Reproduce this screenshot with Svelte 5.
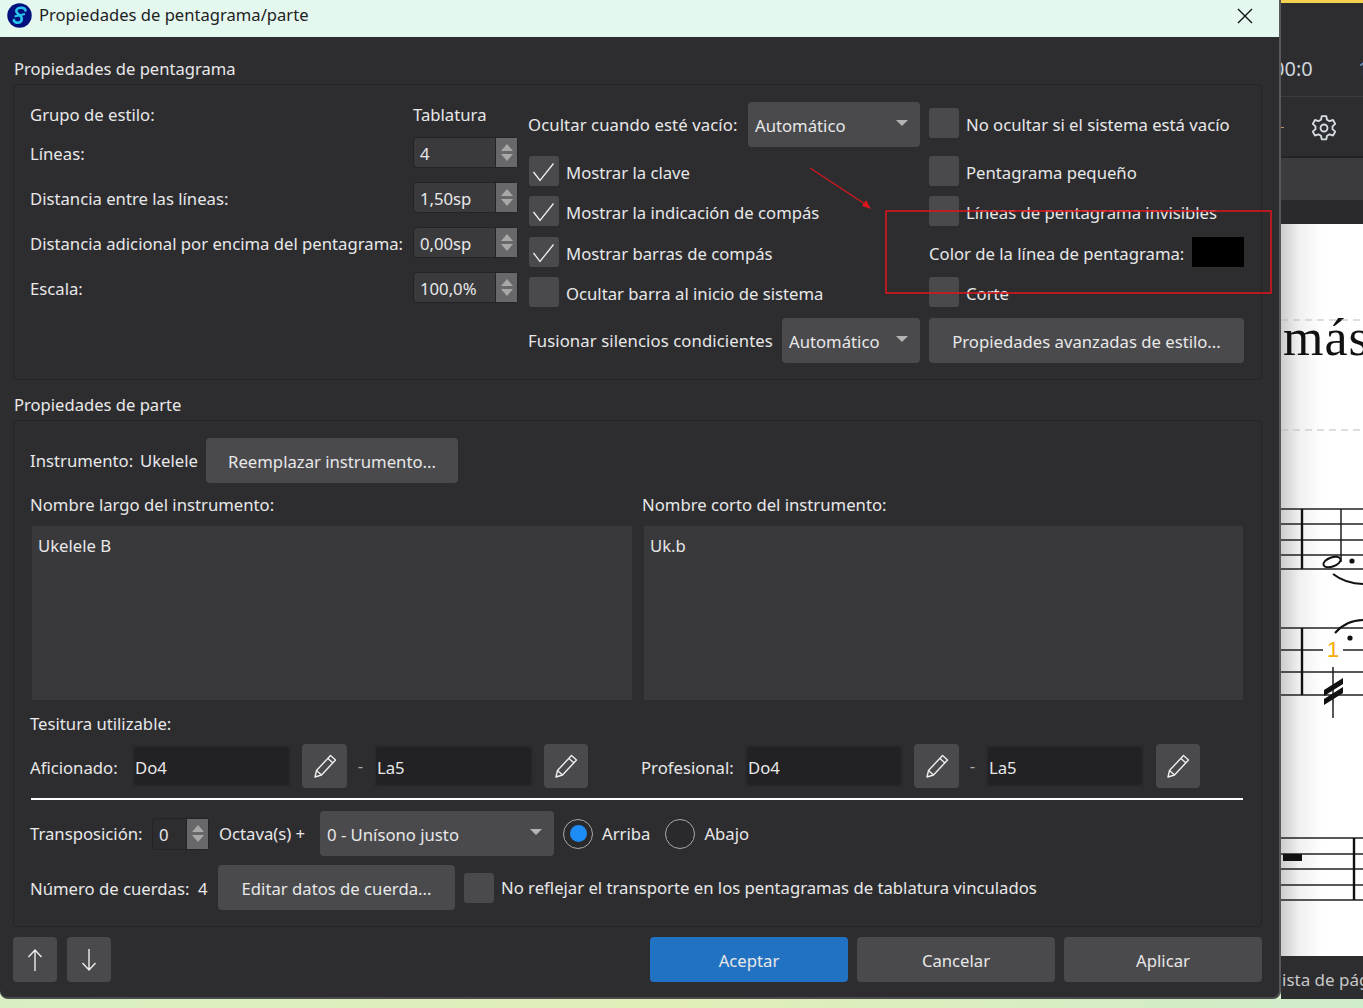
<script>
	const spins = [
		{ label: 'Líneas:', value: '4' },
		{ label: 'Distancia entre las líneas:', value: '1,50sp' },
		{ label: 'Distancia adicional por encima del pentagrama:', value: '0,00sp' },
		{ label: 'Escala:', value: '100,0%' }
	];
	const ranges = [
		{ label: 'Aficionado:', low: 'Do4', high: 'La5' },
		{ label: 'Profesional:', low: 'Do4', high: 'La5' }
	];
</script>

{#snippet spin(value, cls)}
	<div class="spin {cls}">
		<span class="spin-value">{value}</span>
		<span class="spin-arrows"><i class="up"></i><i class="down"></i></span>
	</div>
{/snippet}

{#snippet combo(value, cls)}
	<div class="btn combo {cls}"><span>{value}</span><i class="caret"></i></div>
{/snippet}

{#snippet check(text, on)}
	<label class="check">
		<span class="box">
			{#if on}
				<svg width="30" height="30" viewBox="0 0 30 30"><path d="M4.5 16 L11 24.5 L24.5 7.5" fill="none" stroke="#f0f0f0" stroke-width="1.3" /></svg>
			{/if}
		</span>
		{#if text}<span class="check-text">{text}</span>{/if}
	</label>
{/snippet}

{#snippet pencil()}
	<div class="btn icon-btn">
		<svg width="26" height="26" viewBox="0 0 26 26" fill="none" stroke="#eee" stroke-width="1.4" stroke-linejoin="round">
			<path d="M18.5 2.5 L23.5 7 L9.5 22 L3 24 L4.5 17.5 Z" />
			<path d="M16 5.5 L21 10" />
			<path d="M4.5 17.5 L9.5 22" />
		</svg>
	</div>
{/snippet}

<div class="screen">
	<div class="desk">
		<section class="dialog">
			<header class="title">
				<svg class="logo" width="25" height="25" viewBox="0 0 25 25">
					<circle cx="12.5" cy="12.5" r="12.2" fill="#00107c" />
					<path d="M18.5 7.5 C18 4 11 4 9.5 7 C8.5 9.5 11 11 13 12.5 C15.5 14.5 15.5 18.5 12 19.5 C9.5 20.2 7 19 6.8 17" fill="none" stroke="#27c3ea" stroke-width="2.6" stroke-linecap="round" />
					<path d="M7.5 13.5 L18 11" stroke="#27c3ea" stroke-width="1.8" />
				</svg>
				<span>Propiedades de pentagrama/parte</span>
				<svg class="close" width="16" height="16" viewBox="0 0 16 16"><path d="M1 1 L15 15 M15 1 L1 15" stroke="#111" stroke-width="1.4" /></svg>
			</header>

			<div class="body">
				<h2 class="first">Propiedades de pentagrama</h2>
				<div class="group staff">
					<div class="staff-left">
						<span class="grupo">Grupo de estilo:</span>
						<span class="grupo">Tablatura</span>
						{#each spins as s}
							<span class="spin-label">{s.label}</span>
							{@render spin(s.value, 'wide')}
						{/each}
					</div>

					<div class="staff-right">
						<div class="row">
							<span>Ocultar cuando esté vacío:</span>
							{@render combo('Automático', 'combo-a')}
						</div>
						<div class="offset">{@render check('No ocultar si el sistema está vacío', false)}</div>
						{@render check('Mostrar la clave', true)}
						{@render check('Pentagrama pequeño', false)}
						{@render check('Mostrar la indicación de compás', true)}
						{@render check('Líneas de pentagrama invisibles', false)}
						{@render check('Mostrar barras de compás', true)}
						<div class="color-row">
							<span>Color de la línea de pentagrama:</span>
							<i class="swatch"></i>
						</div>
						{@render check('Ocultar barra al inicio de sistema', false)}
						{@render check('Corte', false)}
						<div class="row">
							<span>Fusionar silencios condicientes</span>
							{@render combo('Automático', 'combo-b')}
						</div>
						<div class="btn wide-btn">Propiedades avanzadas de estilo...</div>
					</div>
				</div>

				<h2>Propiedades de parte</h2>
				<div class="group part">
					<div class="row instrument">
						<span class="inst-label">Instrumento:</span>
						<span class="inst-value">Ukelele</span>
						<div class="btn replace">Reemplazar instrumento...</div>
					</div>

					<div class="names">
						<div class="name-col">
							<span>Nombre largo del instrumento:</span>
							<div class="area">Ukelele B</div>
						</div>
						<div class="name-col">
							<span>Nombre corto del instrumento:</span>
							<div class="area">Uk.b</div>
						</div>
					</div>

					<div class="tesitura">Tesitura utilizable:</div>
					<div class="ranges">
						{#each ranges as r}
							<div class="range">
								<span class="range-label">{r.label}</span>
								<div class="field"><span>{r.low}</span></div>
								{@render pencil()}
								<span class="dash">-</span>
								<div class="field"><span>{r.high}</span></div>
								{@render pencil()}
							</div>
						{/each}
					</div>

					<hr />

					<div class="row transpose">
						<span class="trans-label">Transposición:</span>
						{@render spin('0', 'narrow')}
						<span class="octave">Octava(s) +</span>
						{@render combo('0 - Unísono justo', 'combo-c')}
						<label class="radio"><i class="dot on"></i>Arriba</label>
						<label class="radio"><i class="dot"></i>Abajo</label>
					</div>

					<div class="row strings">
						<span class="string-label">Número de cuerdas:</span>
						<span class="string-count">4</span>
						<div class="btn edit">Editar datos de cuerda...</div>
						{@render check('No reflejar el transporte en los pentagramas de tablatura vinculados', false)}
					</div>
				</div>

				<footer class="footer">
					<div class="btn arrow-btn">
						<svg width="18" height="26" viewBox="0 0 18 26" fill="none" stroke="#eee" stroke-width="1.4"><path d="M9 24 V3 M2.5 10 L9 3 L15.5 10" /></svg>
					</div>
					<div class="btn arrow-btn">
						<svg width="18" height="26" viewBox="0 0 18 26" fill="none" stroke="#eee" stroke-width="1.4"><path d="M9 2 V23 M2.5 16 L9 23 L15.5 16" /></svg>
					</div>
					<div class="btn action primary">Aceptar</div>
					<div class="btn action">Cancelar</div>
					<div class="btn action">Aplicar</div>
				</footer>
			</div>
		</section>

		<aside class="app">
			<div class="app-top"><span>00:0</span><span class="blue-one">1</span></div>
			<div class="app-tools">
				<i class="tick"></i>
				<svg width="30" height="30" viewBox="0 0 24 24" fill="none" stroke="#d5dbe0" stroke-width="1.5" stroke-linejoin="round">
					<circle cx="12" cy="12" r="2.8" />
					<path d="M10.2 2.5 h3.6 l.6 2.9 2 1.1 2.8-.9 1.8 3.1-2.2 2 v2.2 l2.2 2-1.8 3.1-2.8-.9-2 1.1-.6 2.9 h-3.6 l-.6-2.9-2-1.1-2.8.9-1.8-3.1 2.2-2 v-2.2 l-2.2-2 1.8-3.1 2.8.9 2-1.1 z" />
				</svg>
			</div>
			<div class="app-tabs"></div>
			<div class="app-dark"></div>
			<div class="score">
				<svg width="83" height="732" viewBox="1280 224 83 732">
					<text x="1282" y="355" font-family="Liberation Serif, serif" font-size="52" letter-spacing="1" fill="#111">más</text>
					<path d="M1280 320 H1363 M1280 430 H1363" stroke="#bbb" stroke-dasharray="7 5" />
					<g stroke="#222" stroke-width="1.5">
						<path d="M1280 509 H1363 M1280 524 H1363 M1280 540 H1363 M1280 555 H1363 M1280 569 H1363" />
						<path d="M1280 628 H1363 M1280 672 H1363 M1280 695 H1363 M1280 650 H1322 M1342 650 H1363" />
						<path d="M1280 838 H1363 M1280 854 H1363 M1280 869 H1363 M1280 885 H1363 M1280 900 H1363" />
					</g>
					<g stroke="#111" stroke-width="2.4" fill="none">
						<path d="M1301 509 V569 M1301 628 V695 M1353 838 V900" />
						<path d="M1340 509 V562" stroke-width="1.4" />
						<path d="M1332 667 V718" stroke-width="1.4" />
						<ellipse cx="1331" cy="562" rx="9" ry="4.5" transform="rotate(-20 1331 562)" stroke-width="2" />
						<path d="M1332 574 Q1345 584 1363 584" stroke-width="2" />
						<path d="M1334 633 Q1345 620 1363 620" stroke-width="2" />
					</g>
					<circle cx="1351" cy="561" r="2.6" fill="#111" />
					<circle cx="1349" cy="638" r="2.6" fill="#111" />
					<path d="M1323 690 L1342 678 V684 L1323 696 Z M1323 699 L1342 687 V693 L1323 705 Z" fill="#111" />
					<rect x="1282" y="854" width="19" height="7" fill="#111" />
					<text x="1326" y="657" font-family="Liberation Sans, sans-serif" font-size="22" fill="#f5ab00">1</text>
				</svg>
			</div>
			<div class="status"><span>ista de pág</span></div>
		</aside>
	</div>
	<div class="strip"></div>

	<svg class="markup" width="1363" height="1008" viewBox="0 0 1363 1008">
		<rect x="886" y="211" width="385" height="82" fill="none" stroke="#d8161d" stroke-width="1.6" />
		<path d="M810 168 L868 206" stroke="#d8161d" stroke-width="1.2" fill="none" />
		<path d="M871 209 L862 206 L866 200 Z" fill="#d8161d" />
	</svg>
</div>

<style>
	:global(body) {
		margin: 0;
		background: #d8eec6;
	}

	.screen {
		position: relative;
		width: 1363px;
		height: 1008px;
		overflow: hidden;
		font-family: 'Noto Sans', sans-serif;
		font-size: 16.7px;
		line-height: 22px;
		color: #e8e8e8;
	}

	.markup {
		position: absolute;
		inset: 0;
		z-index: 2;
		pointer-events: none;
	}

	.desk {
		display: flex;
		height: 999px;
	}

	.strip {
		height: 9px;
		background: linear-gradient(90deg, #d9efc3, #e1eeb8 50%, #cfeccb);
	}

	.dialog {
		position: relative;
		z-index: 1;
		width: 1281px;
		flex: none;
		box-sizing: border-box;
		border-right: 2px solid #58585b;
		border-bottom: 2px solid #4a4a4c;
		border-radius: 0 0 8px 8px;
		background: #2d2d30;
	}

	.title {
		display: flex;
		align-items: center;
		height: 29px;
		padding: 0 26px 8px 7px;
		background: #e5f8f0;
		color: #222;
		font-size: 16.6px;
	}

	.title span {
		margin-left: 7px;
		flex: 1;
	}

	.logo {
		margin-top: 1px;
	}

	.close {
		margin-top: 2px;
	}

	.body {
		padding: 21px 17px 0 13px;
	}

	h2 {
		margin: 14px 0 4px 1px;
		font-size: 16.6px;
		line-height: 22px;
		font-weight: 400;
	}

	h2.first {
		margin-top: 0;
	}

	.group {
		box-sizing: border-box;
		border: 1px solid #242427;
		border-radius: 4px;
	}

	.staff {
		display: flex;
		gap: 9px;
		height: 296px;
		padding: 17px 0 0 16px;
	}

	.staff-left {
		display: grid;
		grid-template-columns: 383px 105px;
		grid-template-rows: 35px 45px 45px 45px 31px;
		align-items: start;
		width: 489px;
		height: 201px;
		white-space: nowrap;
	}

	.staff-left .grupo {
		margin-top: 2px;
	}

	.spin-label {
		line-height: 33px;
	}

	.staff-right {
		display: grid;
		grid-template-columns: 392px 315px;
		grid-template-rows: 54px 40px 41px 40px 41px 45px;
		column-gap: 9px;
		align-items: start;
		white-space: nowrap;
	}

	.row {
		display: flex;
		align-items: center;
		white-space: nowrap;
	}

	.staff-right .row > span:first-child {
		padding-top: 1px;
		letter-spacing: 0.1px;
	}

	.btn {
		display: flex;
		align-items: center;
		justify-content: center;
		box-sizing: border-box;
		padding-top: 2px;
		border-radius: 4px;
		background: #4a4a4d;
	}

	.combo {
		justify-content: space-between;
		height: 45px;
		padding: 2px 12px 0 7px;
	}

	.combo-a {
		width: 172px;
		margin-left: auto;
	}

	.combo-b {
		width: 138px;
		margin-left: auto;
	}

	.combo-c {
		width: 234px;
		flex: none;
	}

	.caret {
		width: 0;
		height: 0;
		margin-bottom: 6px;
		border-left: 6px solid transparent;
		border-right: 6px solid transparent;
		border-top: 6px solid #b4b4b4;
	}

	.offset {
		margin-top: 6px;
	}

	.check {
		display: flex;
		align-items: center;
		gap: 7px;
		height: 30px;
		margin-left: 1px;
	}

	.check-text {
		padding-top: 4px;
	}

	.offset .check,
	.staff-right > .check:nth-child(even),
	.color-row,
	.strings .check {
		margin-left: 0;
	}

	.strings .check-text {
		padding-top: 0;
	}

	.box {
		flex: none;
		width: 30px;
		height: 30px;
		border-radius: 3px;
		background: #4a4a4d;
	}

	.box svg {
		display: block;
	}

	.color-row {
		display: flex;
		align-items: center;
		justify-content: space-between;
		height: 30px;
	}

	.color-row span {
		padding-top: 4px;
	}

	.swatch {
		width: 52px;
		height: 30px;
		background: #000;
	}

	.wide-btn {
		height: 45px;
	}

	.spin {
		display: flex;
		flex: none;
		box-sizing: border-box;
		height: 31px;
		border: 1px solid #232326;
		border-radius: 4px;
		background: #3a3a3d;
	}

	.spin.wide {
		width: 105px;
	}

	.spin.narrow {
		width: 57px;
		height: 32px;
		background: #2d2d30;
	}

	.spin-value {
		flex: 1;
		padding-left: 6px;
		line-height: 31px;
	}

	.spin-arrows {
		display: flex;
		flex-direction: column;
		align-items: center;
		justify-content: center;
		gap: 3px;
		width: 21px;
		border-left: 1px solid #232326;
		background: #68686b;
	}

	.up,
	.down {
		width: 0;
		height: 0;
		border-left: 6px solid transparent;
		border-right: 6px solid transparent;
	}

	.up {
		border-bottom: 7px solid #a8a8a8;
	}

	.down {
		border-top: 7px solid #a8a8a8;
	}

	.part {
		height: 507px;
		padding: 17px 18px 0 16px;
	}

	.instrument > span {
		padding-top: 1px;
	}

	.inst-label {
		width: 110px;
	}

	.inst-value {
		width: 66px;
	}

	.replace {
		width: 252px;
		height: 45px;
	}

	.names {
		display: grid;
		grid-template-columns: 612px 600px;
		margin-top: 11px;
	}

	.area {
		height: 174px;
		margin: 10px 0 0 2px;
		padding: 9px 6px;
		box-sizing: border-box;
		width: 600px;
		background: #39393c;
	}

	.name-col:last-child .area {
		width: 599px;
	}

	.tesitura {
		margin-top: 13px;
	}

	.ranges {
		display: grid;
		grid-template-columns: 611px 560px;
		margin-top: 9px;
	}

	.range {
		display: flex;
		align-items: center;
		height: 44px;
	}

	.range-label {
		width: 102px;
		flex: none;
		padding-top: 4px;
	}

	.range:last-child .range-label {
		width: 104px;
	}

	.range:last-child .field {
		width: 158px;
	}

	.range:last-child .icon-btn:last-child {
		margin-left: 1px;
	}

	.field {
		box-sizing: border-box;
		width: 159px;
		height: 42px;
		padding: 2px;
		border-radius: 2px;
		background: #29292b;
		margin-right: 11px;
	}

	.field span {
		display: block;
		height: 38px;
		padding-left: 1px;
		border-radius: 4px;
		background: #222225;
		line-height: 42px;
	}

	.icon-btn {
		width: 45px;
		height: 44px;
		padding-top: 0;
	}

	.icon-btn:last-child {
		width: 44px;
	}

	.dash {
		width: 27px;
		text-align: center;
		color: #aaa;
	}

	hr {
		height: 2px;
		margin: 10px 0 0 1px;
		border: 0;
		background: #fff;
	}

	.transpose {
		height: 45px;
		margin-top: 11px;
	}

	.trans-label {
		width: 122px;
		padding-top: 1px;
	}

	.octave {
		width: 101px;
		margin-left: 10px;
		padding-top: 1px;
	}

	.radio {
		display: flex;
		align-items: center;
		gap: 9px;
		margin-left: 9px;
	}

	.radio + .radio {
		margin-left: 15px;
	}

	.dot {
		position: relative;
		box-sizing: border-box;
		width: 30px;
		height: 30px;
		border: 1.5px solid #a8a8a8;
		border-radius: 50%;
		background: #2a2a2d;
	}

	.dot.on::after {
		content: '';
		position: absolute;
		inset: 5.5px;
		border-radius: 50%;
		background: #1e8cf5;
	}

	.strings {
		height: 45px;
		margin-top: 9px;
	}

	.string-label {
		width: 168px;
		padding-top: 2px;
	}

	.string-count {
		width: 20px;
		padding-top: 2px;
	}

	.edit {
		width: 237px;
		height: 45px;
		margin-right: 9px;
	}

	.footer {
		display: flex;
		margin-top: 10px;
		gap: 9px;
	}

	.arrow-btn {
		width: 44px;
		height: 45px;
		margin-right: 1px;
		padding-top: 0;
	}

	.action {
		width: 198px;
		height: 45px;
		padding-top: 3px;
	}

	.primary {
		margin-left: auto;
		background: #2272c3;
	}

	.app {
		flex: 1;
		display: flex;
		flex-direction: column;
		min-width: 0;
		background: #2d2d30;
	}

	.app > div {
		flex: none;
	}

	.app-top {
		display: flex;
		justify-content: space-between;
		box-sizing: border-box;
		height: 97px;
		padding-top: 55px;
		border-top: 3px solid #f5d04e;
		border-bottom: 1px solid #3c3c3f;
		font-size: 20px;
		color: #cdd5dc;
		white-space: nowrap;
	}

	.app-top span:first-child {
		margin-left: -8px;
	}

	.blue-one {
		width: 5px;
		overflow: hidden;
		color: #7f9ac4;
	}

	.app-tools {
		display: flex;
		align-items: center;
		justify-content: space-between;
		box-sizing: border-box;
		height: 61px;
		padding: 2px 24px 0 0;
		border-bottom: 2px solid #232326;
	}

	.tick {
		width: 3px;
		height: 1px;
		background: #c08a5a;
	}

	.app-tabs {
		height: 42px;
		background: #3b3b3e;
	}

	.app-dark {
		height: 24px;
		background: #2a2a2d;
	}

	.score {
		height: 732px;
		background: linear-gradient(90deg, rgba(0, 0, 0, 0.2), rgba(0, 0, 0, 0.06) 18px, rgba(0, 0, 0, 0) 42px), #fff;
	}

	.score svg {
		display: block;
	}

	.app > .status {
		flex: 1;
		min-height: 0;
		overflow: hidden;
		background: #2d2d30;
		font-size: 17px;
		color: #c8c8c8;
		white-space: nowrap;
		line-height: 48px;
	}

	.status span {
		margin-left: 1px;
	}
</style>
